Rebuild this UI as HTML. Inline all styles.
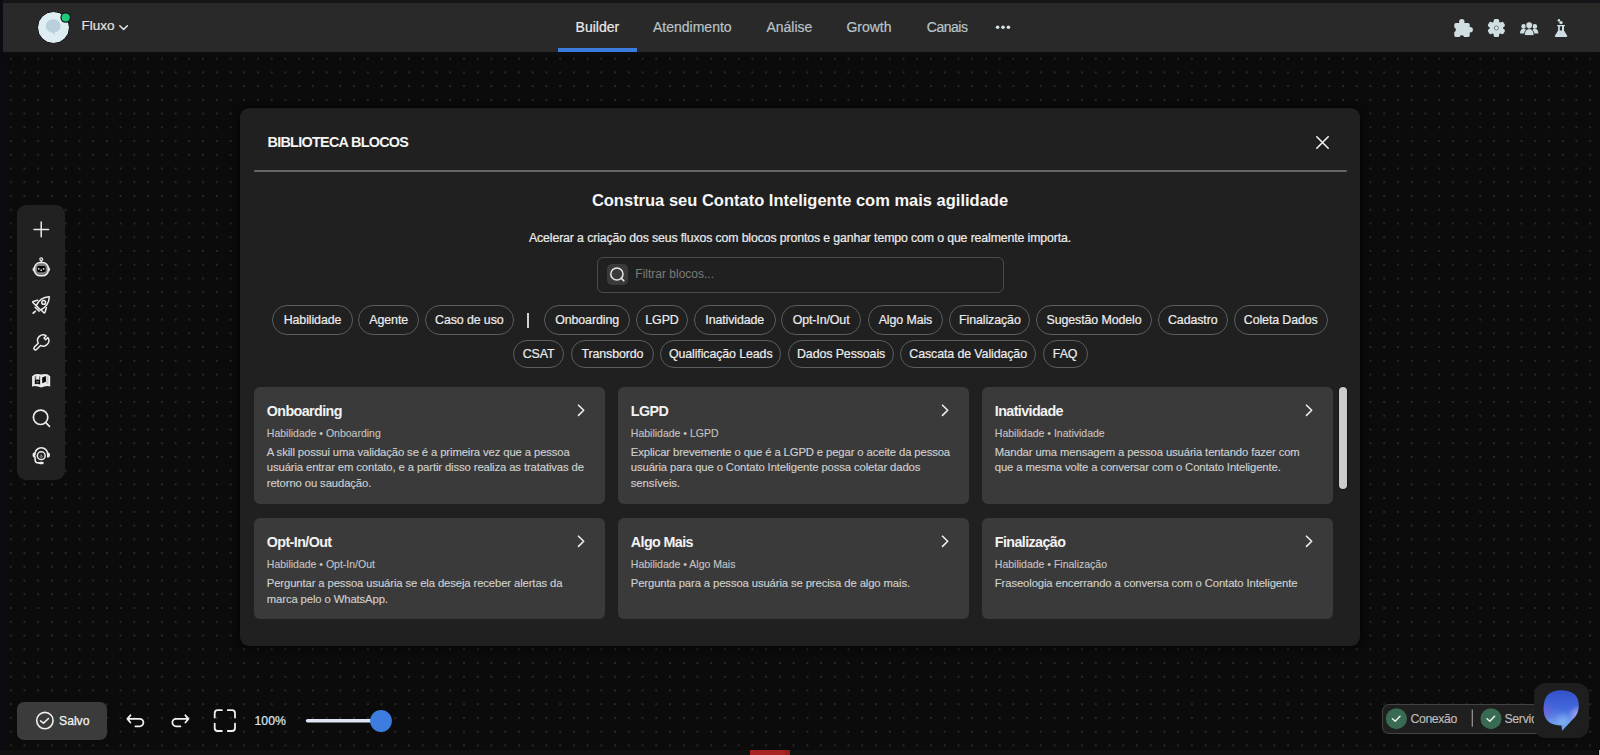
<!DOCTYPE html>
<html><head><meta charset="utf-8">
<style>
*{box-sizing:border-box;margin:0;padding:0}
html,body{width:1600px;height:755px;overflow:hidden;background:#0b0b0b;font-family:"Liberation Sans",sans-serif;}
.abs{position:absolute}
#canvas{position:absolute;left:0;top:0;width:1600px;height:755px;background-color:#0b0b0b;
background-image:radial-gradient(circle, #282828 0.85px, transparent 1.25px);
background-size:13.74px 13.74px;background-position:3.9px 51.8px;}
#tstrip{left:0;top:0;width:1600px;height:3px;background:#151719}
#lstrip{left:0;top:0;width:3px;height:755px;background:#0b0b12}
#bstrip{left:0;top:749.6px;width:1600px;height:6px;background:#111111}
#header{left:3px;top:3px;width:1597px;height:48.5px;background:#292929;box-shadow:0 1px 5px rgba(16,20,24,.9)}
.tab{-webkit-text-stroke:0.2px currentColor;position:absolute;top:16.3px;font-size:14px;color:#b9c3c7;line-height:16px;white-space:nowrap}
#toolbar{left:17px;top:205px;width:48px;height:275px;background:#212121;border-radius:9px}
#modal{left:240px;top:107.8px;width:1120.3px;height:538.3px;background:#202020;border-radius:9px;box-shadow:0 0 6px 2px rgba(0,0,0,.55)}
.chip{-webkit-text-stroke:0.2px #ececec;letter-spacing:-0.1px;position:absolute;height:29.6px;border:1.2px solid #5a5e5e;border-radius:15px;font-size:12.4px;color:#ececec;line-height:28px;text-align:center;white-space:nowrap}
.card{position:absolute;width:350.9px;background:#3a3a3a;border-radius:6px}
.card .t{position:absolute;left:13px;top:16.4px;font-size:14.3px;font-weight:bold;color:#f2f2f2;white-space:nowrap;line-height:17px;letter-spacing:-0.6px}
.card .g{-webkit-text-stroke:0.12px #c4c4c4;position:absolute;left:13px;top:40.1px;font-size:10.5px;color:#c4c4c4;white-space:nowrap;line-height:12px}
.card .d{-webkit-text-stroke:0.15px #cfcfcf;position:absolute;left:13px;top:58.5px;width:345px;white-space:nowrap;font-size:11.3px;color:#cfcfcf;line-height:15.2px;letter-spacing:-0.12px}
.card svg.chev{position:absolute;left:321px;top:16.5px}
</style></head>
<body>
<div id="canvas"></div>
<div id="tstrip" class="abs"></div>
<div id="lstrip" class="abs"></div>
<div id="bstrip" class="abs"></div>
<div class="abs" style="left:750px;top:749.8px;width:39.5px;height:6px;background:#a82424"></div><div class="abs" style="left:785px;top:749.8px;width:4.5px;height:6px;background:#962020"></div>

<div id="header" class="abs">
  <div class="abs" style="left:33.7px;top:8px;width:33px;height:33px;border-radius:50%;background:#deedf2;border:1.4px solid #050507"></div>
  <svg class="abs" style="left:0;top:0" width="140" height="48" viewBox="3 3 140 48">
    <path d="M53.2 19.3c4 0 7.3 2.9 7.3 6.6 0 3.1-2.3 5.7-5.5 6.4l-0.9 2.7-1.6-2.5c-3.9-0.2-6.6-3-6.6-6.6 0-3.7 3.3-6.6 7.3-6.6z" fill="#b9cfdc"/>
    <circle cx="65.7" cy="17.5" r="5.3" fill="#12121a"/>
    <circle cx="65.7" cy="17.5" r="4.1" fill="#22c97a"/>
    <path d="M119.8 25.7l3.8 3.7 3.8-3.7" fill="none" stroke="#e2e2e2" stroke-width="1.5" stroke-linecap="round" stroke-linejoin="round"/>
  </svg>
  <div class="abs" style="left:78.5px;top:15.9px;font-size:13.5px;line-height:13.5px;color:#e2e2e2;-webkit-text-stroke:0.2px #e2e2e2">Fluxo</div>
  <div class="tab" style="left:572.6px;color:#e9e9e9">Builder</div>
  <div class="tab" style="left:650px">Atendimento</div>
  <div class="tab" style="left:763.4px">Análise</div>
  <div class="tab" style="left:843.4px">Growth</div>
  <div class="tab" style="left:923.8px;letter-spacing:-0.5px">Canais</div>
  <div class="abs" style="left:555px;top:45px;width:79px;height:3.5px;background:#3b7ddd"></div>
  <svg class="abs" style="left:0;top:0" width="1597" height="48" viewBox="3 3 1597 48">
    <g fill="#d3e3e8">
      <circle cx="997.6" cy="27.2" r="1.8"/><circle cx="1003" cy="27.2" r="1.8"/><circle cx="1008.4" cy="27.2" r="1.8"/>
    </g>
    <g fill="#cfdee3">
      <!-- puzzle -->
      <rect x="1454.3" y="22.9" width="15.4" height="14" rx="1.6"/>
      <circle cx="1461.8" cy="21.7" r="2.7"/>
      <circle cx="1470.2" cy="29.8" r="2.7"/>
      <circle cx="1461.8" cy="37.6" r="2.3" fill="#292929"/>
      <circle cx="1453.6" cy="29.8" r="2.3" fill="#292929"/>
      <!-- gear -->
      <g transform="translate(1496.4 28)"><circle r="6.8"/><rect x="-2.7" y="-8.9" width="5.4" height="17.8" rx="1.5"/><rect x="-2.7" y="-8.9" width="5.4" height="17.8" rx="1.5" transform="rotate(60)"/><rect x="-2.7" y="-8.9" width="5.4" height="17.8" rx="1.5" transform="rotate(120)"/><circle r="2" fill="#e2eef2" stroke="#6d787b" stroke-width="1"/></g>
      <!-- group -->
      <circle cx="1523.6" cy="26.4" r="2.3"/>
      <path d="M1520 33.4c0-2.8 1.3-4.6 3.6-4.6 0.9 0 1.6 0.3 2.2 0.8l-0.6 3.8z"/>
      <circle cx="1534.8" cy="26.4" r="2.3"/>
      <path d="M1538.4 33.4c0-2.8-1.3-4.6-3.6-4.6-0.9 0-1.6 0.3-2.2 0.8l0.6 3.8z"/>
      <g stroke="#292929" stroke-width="0.9">
      <circle cx="1529.2" cy="25.2" r="3.5"/>
      <path d="M1524.3 35.6c0-4.3 2-6.9 4.9-6.9s4.9 2.6 4.9 6.9z"/>
      </g>
      <circle cx="1529.2" cy="27" r="1.6"/>
      <!-- flask -->
      <circle cx="1558.9" cy="20.4" r="1.3"/><circle cx="1561" cy="22.6" r="1.7"/>
      <path fill-rule="evenodd" d="M1557.2 24.9h7.7v1.4h-0.9v4.2l3.2 5.3c0.4 0.7 0 1.2-0.8 1.2h-10.7c-0.8 0-1.2-0.5-0.8-1.2l3.2-5.3v-4.2h-0.9z M1559.8 26.3v4.1h2.2v-4.1z"/>
    </g>
  </svg>
</div>

<div id="toolbar" class="abs"></div>
<svg class="abs" style="left:0;top:0" width="80" height="500" viewBox="0 0 80 500">
  <g fill="none" stroke="#e8e8e8" stroke-width="1.5" stroke-linecap="round" stroke-linejoin="round">
    <path d="M34 229.5h14.6M41.2 222v14.8"/>
  </g>
  <!-- robot -->
  <g>
    <path d="M34.2 267.1a2.4 2.4 0 0 0 0 4.6z M48.5 267.1a2.4 2.4 0 0 1 0 4.6z" fill="#d8d8d8"/>
    <rect x="34.5" y="262.6" width="13.8" height="13.2" rx="5.6" fill="#7d7d7d" stroke="#ececec" stroke-width="1.5"/>
    <rect x="37.1" y="266.1" width="8.6" height="6.1" rx="1.6" fill="#080808"/>
    <circle cx="41.25" cy="259.3" r="1.4" fill="none" stroke="#e6e6e6" stroke-width="1.3"/>
    <path d="M41.25 260.6v2" stroke="#e6e6e6" stroke-width="1.3"/>
    <circle cx="38.8" cy="268.8" r="0.9" fill="#e0e0e0"/><circle cx="43.6" cy="268.8" r="0.9" fill="#e0e0e0"/><circle cx="41.2" cy="270.2" r="0.9" fill="#d0d0d0"/>
  </g>
  <!-- rocket -->
  <g fill="none" stroke="#ececec" stroke-width="1.5" stroke-linecap="round" stroke-linejoin="round">
    <path d="M36.2 305.6C38.5 300.5 43 297 49.3 296.8 49.1 303 45.6 307.6 40.6 310z"/>
    <path d="M37.6 300.3L33.2 301.4Q32.3 301.8 32.9 302.5L35.6 305.1"/>
    <path d="M46.4 307.7L44.9 312.4Q44.5 313.3 43.8 312.7L41.1 309.9"/>
    <path d="M35.1 307.2L39.2 311.1"/>
    <circle cx="43.7" cy="302.4" r="1.9"/>
    <path d="M33.2 313.2L35.3 311.3" stroke-width="1.7"/>
  </g>
  <!-- wrench -->
  <path d="M47.92 337.48A5.6 5.6 0 0 1 40.53 345.43L36.55 349.41A1.6 1.6 0 0 1 34.29 347.15L38.27 343.17A5.6 5.6 0 0 1 46.22 335.78L43.98 338.02L45.68 339.72Z" fill="none" stroke="#ececec" stroke-width="1.5" stroke-linejoin="round"/>
  <!-- book -->
  <defs><linearGradient id="bkg" x1="0" y1="375.5" x2="0" y2="380" gradientUnits="userSpaceOnUse"><stop offset="0" stop-color="#9a9a9a"/><stop offset="1" stop-color="#444"/></linearGradient></defs>
  <path d="M32.1 376.2Q35.5 372.6 41.2 374.6Q46.9 372.6 50.2 376.2V386.4Q45.8 385.4 41.2 387.6Q36.6 385.4 32.1 386.4Z" fill="#ececec"/>
  <path d="M34.7 376.1Q37.5 375.2 40.2 376.3V384.4Q37.5 383.6 34.7 384.2Z" fill="url(#bkg)"/>
  <path d="M36.4 375.6H38.9V379.9L37.65 378.9 36.4 379.9Z" fill="#f2f2f2"/>
  <path d="M35.1 379.9H39.9V383.9Q37.5 383.4 35.1 383.8Z" fill="#050505"/>
  <rect x="36.4" y="381" width="2.3" height="1.6" fill="#777"/>
  <path d="M42.2 377.4L45.9 375.9V381.8L42.2 383.2Z" fill="#050505"/>
  <path d="M46.2 375.9Q47.6 375.9 48.4 376.4V384.3Q47.4 383.9 46.2 383.9Z" fill="#c9c9c9"/>
  <!-- search -->
  <g fill="none" stroke="#ececec" stroke-width="1.7" stroke-linecap="round">
    <circle cx="40.6" cy="417.3" r="7.2"/>
    <path d="M46.3 423.2l3.2 3.1"/>
  </g>
  <!-- support -->
  <g fill="none" stroke="#ececec" stroke-width="1.6" stroke-linecap="round" stroke-linejoin="round">
    <path d="M34.9 454.2a6.4 6.4 0 0 1 12.8 0"/>
    <circle cx="41.25" cy="455.7" r="3.9" stroke-width="1.5"/>
    <path d="M35.1 457.4V459.8Q35.1 462.9 38.6 462.9H40"/>
  </g>
  <g fill="#ececec">
    <path d="M35.3 452.6H34.2Q32.6 452.6 32.6 454.6V455.6Q32.6 457.6 34.2 457.6H35.3Z"/>
    <path d="M47 452.6H48.3Q49.9 452.6 49.9 454.6V455.6Q49.9 457.6 48.3 457.6H47Z"/>
    <rect x="38.9" y="461.8" width="4.8" height="2.5" rx="1.25"/>
  </g>
  <path d="M39.7 456.6Q41.25 457.9 42.8 456.6" stroke="#aaaaaa" stroke-width="1" fill="none"/>
  <circle cx="41.25" cy="455.2" r="0.8" fill="#aaaaaa"/>
</svg>

<div id="modal" class="abs">
<div class="abs" id="mtitle" style="left:27.5px;top:27.2px;font-size:14.4px;line-height:14.5px;font-weight:bold;letter-spacing:-0.72px;color:#f4f4f4;white-space:nowrap">BIBLIOTECA BLOCOS</div>
<svg class="abs" style="left:1070px;top:22px" width="25" height="25" viewBox="0 0 25 25"><path d="M6.8 6.8l11.4 11.4M18.2 6.8L6.8 18.2" stroke="#f0f0f0" stroke-width="1.6" stroke-linecap="round"/></svg>
<div class="abs" style="left:14px;top:62.1px;width:1093px;height:2.2px;background:#666666;border-radius:1px"></div>
<div class="abs" id="mhead" style="left:0;top:84.3px;width:1120px;text-align:center;font-size:16.5px;line-height:16.5px;font-weight:bold;color:#f6f6f6;white-space:nowrap">Construa seu Contato Inteligente com mais agilidade</div>
<div class="abs" id="msub" style="left:0;top:124.1px;width:1120px;text-align:center;font-size:12.3px;line-height:12.3px;color:#ececec;letter-spacing:-0.12px;-webkit-text-stroke:0.2px #ececec;white-space:nowrap">Acelerar a criação dos seus fluxos com blocos prontos e ganhar tempo com o que realmente importa.</div>
<div class="abs" style="left:356.5px;top:149px;width:407.5px;height:36.2px;border:1px solid #4b4b4b;border-radius:6px"></div>
<div class="abs" style="left:367.2px;top:156.4px;width:20.6px;height:20.6px;background:#3a3a3a;border-radius:5px"></div>
<svg class="abs" style="left:367.2px;top:156.4px" width="21" height="21" viewBox="0 0 21 21"><circle cx="9.9" cy="10" r="6.1" fill="none" stroke="#e8e8e8" stroke-width="1.5"/><path d="M14.4 14.4l2.4 2.4" stroke="#e8e8e8" stroke-width="1.6" stroke-linecap="round"/></svg>
<div class="abs" id="mph" style="left:395.3px;top:160.2px;font-size:12px;line-height:12px;color:#7b7b7b;white-space:nowrap">Filtrar blocos...</div>
<div class="abs" style="left:287.3px;top:205.5px;width:1.8px;height:14.5px;background:#d0d0d0"></div>
<div class="chip" style="left:32.0px;top:197.6px;width:81.0px">Habilidade</div>
<div class="chip" style="left:118.0px;top:197.6px;width:61.4px">Agente</div>
<div class="chip" style="left:185.0px;top:197.6px;width:88.6px">Caso de uso</div>
<div class="chip" style="left:303.8px;top:197.6px;width:86.6px">Onboarding</div>
<div class="chip" style="left:395.6px;top:197.6px;width:52.8px">LGPD</div>
<div class="chip" style="left:454.0px;top:197.6px;width:81.5px">Inatividade</div>
<div class="chip" style="left:540.7px;top:197.6px;width:80.8px">Opt-In/Out</div>
<div class="chip" style="left:627.5px;top:197.6px;width:75.9px">Algo Mais</div>
<div class="chip" style="left:709.4px;top:197.6px;width:81.0px">Finalização</div>
<div class="chip" style="left:796.0px;top:197.6px;width:116.0px">Sugestão Modelo</div>
<div class="chip" style="left:918.0px;top:197.6px;width:69.5px">Cadastro</div>
<div class="chip" style="left:993.5px;top:197.6px;width:94.5px">Coleta Dados</div>
<div class="chip" style="left:273.1px;top:232.2px;height:28.4px;line-height:26.5px;width:50.9px">CSAT</div>
<div class="chip" style="left:330.6px;top:232.2px;height:28.4px;line-height:26.5px;width:83.7px">Transbordo</div>
<div class="chip" style="left:419.9px;top:232.2px;height:28.4px;line-height:26.5px;width:121.6px">Qualificação Leads</div>
<div class="chip" style="left:548.2px;top:232.2px;height:28.4px;line-height:26.5px;width:105.8px">Dados Pessoais</div>
<div class="chip" style="left:660.3px;top:232.2px;height:28.4px;line-height:26.5px;width:135.7px">Cascata de Validação</div>
<div class="chip" style="left:802.6px;top:232.2px;height:28.4px;line-height:26.5px;width:45.0px">FAQ</div>
<div class="card" style="left:13.8px;top:278.8px;height:117.2px"><div class="t">Onboarding</div><svg class="chev" width="10" height="14" viewBox="0 0 10 14"><path d="M3.5 2.2l5.2 5.1-5.2 5.1" fill="none" stroke="#ededed" stroke-width="1.6" stroke-linecap="round" stroke-linejoin="round"/></svg><div class="g">Habilidade • Onboarding</div><div class="d">A skill possui uma validação se é a primeira vez que a pessoa<br>usuária entrar em contato, e a partir disso realiza as tratativas de<br>retorno ou saudação.</div></div>
<div class="card" style="left:377.8px;top:278.8px;height:117.2px"><div class="t">LGPD</div><svg class="chev" width="10" height="14" viewBox="0 0 10 14"><path d="M3.5 2.2l5.2 5.1-5.2 5.1" fill="none" stroke="#ededed" stroke-width="1.6" stroke-linecap="round" stroke-linejoin="round"/></svg><div class="g">Habilidade • LGPD</div><div class="d">Explicar brevemente o que é a LGPD e pegar o aceite da pessoa<br>usuária para que o Contato Inteligente possa coletar dados<br>sensíveis.</div></div>
<div class="card" style="left:741.8px;top:278.8px;height:117.2px"><div class="t">Inatividade</div><svg class="chev" width="10" height="14" viewBox="0 0 10 14"><path d="M3.5 2.2l5.2 5.1-5.2 5.1" fill="none" stroke="#ededed" stroke-width="1.6" stroke-linecap="round" stroke-linejoin="round"/></svg><div class="g">Habilidade • Inatividade</div><div class="d">Mandar uma mensagem a pessoa usuária tentando fazer com<br>que a mesma volte a conversar com o Contato Inteligente.</div></div>
<div class="card" style="left:13.8px;top:410.0px;height:101.3px"><div class="t">Opt-In/Out</div><svg class="chev" width="10" height="14" viewBox="0 0 10 14"><path d="M3.5 2.2l5.2 5.1-5.2 5.1" fill="none" stroke="#ededed" stroke-width="1.6" stroke-linecap="round" stroke-linejoin="round"/></svg><div class="g">Habilidade • Opt-In/Out</div><div class="d">Perguntar a pessoa usuária se ela deseja receber alertas da<br>marca pelo o WhatsApp.</div></div>
<div class="card" style="left:377.8px;top:410.0px;height:101.3px"><div class="t">Algo Mais</div><svg class="chev" width="10" height="14" viewBox="0 0 10 14"><path d="M3.5 2.2l5.2 5.1-5.2 5.1" fill="none" stroke="#ededed" stroke-width="1.6" stroke-linecap="round" stroke-linejoin="round"/></svg><div class="g">Habilidade • Algo Mais</div><div class="d">Pergunta para a pessoa usuária se precisa de algo mais.</div></div>
<div class="card" style="left:741.8px;top:410.0px;height:101.3px"><div class="t">Finalização</div><svg class="chev" width="10" height="14" viewBox="0 0 10 14"><path d="M3.5 2.2l5.2 5.1-5.2 5.1" fill="none" stroke="#ededed" stroke-width="1.6" stroke-linecap="round" stroke-linejoin="round"/></svg><div class="g">Habilidade • Finalização</div><div class="d">Fraseologia encerrando a conversa com o Contato Inteligente</div></div>
<div class="abs" style="left:1098.9px;top:279px;width:8px;height:102.4px;background:#cbcbcb;border-radius:4px;box-shadow:0 0 0 0.8px #141414"></div>
</div>

<div class="abs" style="left:17px;top:701.5px;width:89.6px;height:38px;background:#3b3b3b;border-radius:7px"></div>
<div class="abs" style="left:59px;top:714.9px;font-size:12.2px;line-height:12.2px;color:#f2f2f2;-webkit-text-stroke:0.25px #f2f2f2;white-space:nowrap">Salvo</div>
<div class="abs" style="left:254.6px;top:714.5px;font-size:12.2px;line-height:12.2px;color:#dfe7ee;-webkit-text-stroke:0.2px #dfe7ee;white-space:nowrap">100%</div>
<svg class="abs" style="left:0;top:680px" width="420" height="75" viewBox="0 680 420 75">
  <g fill="none" stroke="#f0f0f0" stroke-width="1.6" stroke-linecap="round" stroke-linejoin="round">
    <circle cx="44.9" cy="720.6" r="8.2"/>
    <path d="M40.5 720.9l3 2.2 5-4.6"/>
    <path d="M135.4 726.3h4.3a3.7 3.7 0 0 0 0-7.4h-12.2M130.4 715.3l-3 3.6 3 3.6" stroke-width="1.8"/>
    <path d="M180.4 726.3h-4.3a3.7 3.7 0 0 1 0-7.4h12.2M185.4 715.3l3 3.6-3 3.6" stroke-width="1.8"/>
    <path d="M214.7 717.6v-4.4a3 3 0 0 1 3-3h4.2M227.8 710.2h4.2a3 3 0 0 1 3 3v4.4M235 723.6v4.4a3 3 0 0 1-3 3h-4.2M221.9 731h-4.2a3 3 0 0 1-3-3v-4.4" stroke-width="1.8"/>
  </g>
  <path d="M307.6 720.8h66" stroke="#dfe6f1" stroke-width="3.6" stroke-linecap="round"/>
  <circle cx="381" cy="721" r="10.9" fill="#3d7ddf"/>
</svg>
<div class="abs" style="left:1382px;top:703.9px;width:200px;height:29.8px;background:#1f1f1f;border:1.5px solid #434343;border-radius:7px"></div>
<svg class="abs" style="left:1380px;top:700px" width="160" height="40" viewBox="1380 700 160 40">
  <circle cx="1396.4" cy="718.7" r="10.5" fill="#386b52"/>
  <circle cx="1491" cy="718.7" r="10.5" fill="#386b52"/>
  <g fill="none" stroke="#f2f2f2" stroke-width="1.5" stroke-linecap="round" stroke-linejoin="round">
    <path d="M1392.4 718.8l2.8 2.4 4.8-4.9"/>
    <path d="M1487 718.8l2.8 2.4 4.8-4.9"/>
  </g>
  <path d="M1472.3 709.4v17.3" stroke="#9a9a9a" stroke-width="1.2"/>
</svg>
<div class="abs" style="left:1410.5px;top:712.8px;font-size:12.3px;line-height:12.3px;color:#bcbcbc;letter-spacing:-0.4px;-webkit-text-stroke:0.15px #bcbcbc;white-space:nowrap">Conexão</div>
<div class="abs" style="left:1504.4px;top:712.8px;width:30px;overflow:hidden;font-size:12.3px;line-height:12.3px;color:#bcbcbc;letter-spacing:-0.3px;-webkit-text-stroke:0.15px #bcbcbc;white-space:nowrap">Serviços</div>
<div class="abs" style="left:1534.2px;top:682.7px;width:54.7px;height:55px;background:#1e1e1e;border-radius:12px"></div>
<svg class="abs" style="left:1530px;top:680px" width="70" height="60" viewBox="1530 680 70 60">
  <defs>
    <linearGradient id="lg0" x1="0" y1="690" x2="0" y2="731" gradientUnits="userSpaceOnUse">
      <stop offset="0" stop-color="#3550c8"/>
      <stop offset="0.45" stop-color="#4368dc"/>
      <stop offset="0.8" stop-color="#6e9cee"/>
      <stop offset="1" stop-color="#5a90d8"/>
    </linearGradient>
    <radialGradient id="rgL" cx="1545" cy="712" r="11" gradientUnits="userSpaceOnUse">
      <stop offset="0" stop-color="#7262d8" stop-opacity="0.75"/>
      <stop offset="1" stop-color="#7262d8" stop-opacity="0"/>
    </radialGradient>
    <radialGradient id="rgR" cx="1578" cy="715" r="10" gradientUnits="userSpaceOnUse">
      <stop offset="0" stop-color="#b4acf8" stop-opacity="0.95"/>
      <stop offset="1" stop-color="#b4acf8" stop-opacity="0"/>
    </radialGradient>
    <radialGradient id="rgC" cx="1563" cy="721" r="9" gradientUnits="userSpaceOnUse">
      <stop offset="0" stop-color="#8cbcf8" stop-opacity="0.6"/>
      <stop offset="1" stop-color="#8cbcf8" stop-opacity="0"/>
    </radialGradient>
  </defs>
  <path d="M1561.2 690.3C1572.5 690.3 1578.8 695.5 1578.8 705.2 1578.8 711.5 1576.5 715.8 1572.8 719.2L1562 731 1561.6 725.4C1550 725.4 1543.6 720.5 1543.6 708.5 1543.6 695.8 1549.8 690.3 1561.2 690.3Z" fill="url(#lg0)"/>
  <path d="M1561.2 690.3C1572.5 690.3 1578.8 695.5 1578.8 705.2 1578.8 711.5 1576.5 715.8 1572.8 719.2L1562 731 1561.6 725.4C1550 725.4 1543.6 720.5 1543.6 708.5 1543.6 695.8 1549.8 690.3 1561.2 690.3Z" fill="url(#rgL)"/>
  <path d="M1561.2 690.3C1572.5 690.3 1578.8 695.5 1578.8 705.2 1578.8 711.5 1576.5 715.8 1572.8 719.2L1562 731 1561.6 725.4C1550 725.4 1543.6 720.5 1543.6 708.5 1543.6 695.8 1549.8 690.3 1561.2 690.3Z" fill="url(#rgR)"/>
  <path d="M1561.2 690.3C1572.5 690.3 1578.8 695.5 1578.8 705.2 1578.8 711.5 1576.5 715.8 1572.8 719.2L1562 731 1561.6 725.4C1550 725.4 1543.6 720.5 1543.6 708.5 1543.6 695.8 1549.8 690.3 1561.2 690.3Z" fill="url(#rgC)"/>
</svg>
<div class="abs" style="left:1598px;top:749.5px;width:1px;height:6px;background:#000"></div>
<div class="abs" style="left:1599px;top:749.5px;width:1px;height:6px;background:#bdbdbd"></div>
</body></html>
